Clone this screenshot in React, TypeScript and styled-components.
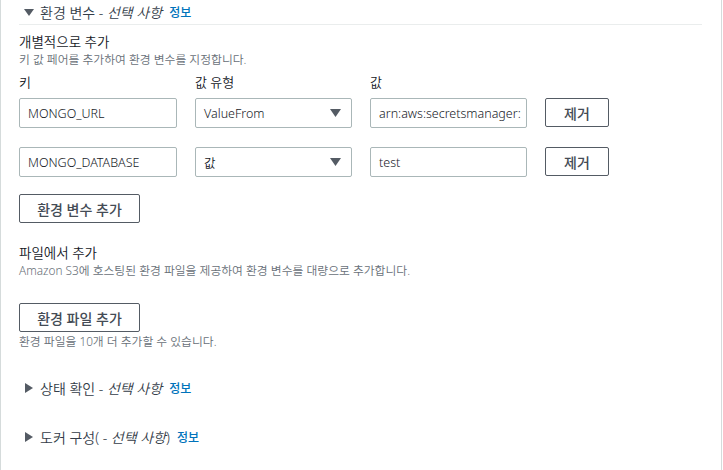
import React from 'react'
import styled, { createGlobalStyle } from 'styled-components'

const GlobalStyle = createGlobalStyle`
    html, body {
        margin: 0;
        padding: 0;
        background: #ffffff;
    }
    body {
        font-family: "Noto Sans", "Noto Sans CJK KR", sans-serif;
        font-weight: 350;
        color: #16191f;
    }
`

const Panel = styled.div`
    width: 722px;
    height: 470px;
    box-sizing: border-box;
    border-left: 1px solid #d5dbdb;
    border-right: 1px solid #d5dbdb;
    padding: 0 19px 0 18px;
`

const SectionHeader = styled.div<{ $divider?: boolean }>`
    display: flex;
    align-items: center;
    height: 24px;
    padding-left: 5px;
    border-bottom: ${(p) => (p.$divider ? '1px solid #eaeded' : 'none')};
    font-size: 14px;
    color: #333c48;
`

const Caret = styled.svg`
    width: 10px;
    height: 10px;
    margin-right: 6px;
    fill: #545b64;
    flex-shrink: 0;
`

const Optional = styled.i`
    font-style: italic;
`

const InfoLink = styled.a`
    margin-left: 7px;
    font-size: 12px;
    font-weight: 500;
    color: #0073bb;
    text-decoration: none;
`

const GroupTitle = styled.div`
    font-size: 13.5px;
    color: #16191f;
    line-height: 18px;
`

const Description = styled.div`
    font-size: 11.8px;
    color: #687078;
    line-height: 16px;
`

const Fields = styled.div`
    display: grid;
    grid-template-columns: 158px 157px 157px 64px;
    column-gap: 18px;
    row-gap: 19px;
    margin-top: 6px;
`

const Label = styled.div`
    font-size: 13px;
    line-height: 18px;
    color: #16191f;
    margin-bottom: -12px;
`

const Input = styled.div`
    height: 30px;
    box-sizing: border-box;
    border: 1px solid #aab7b8;
    border-radius: 2px;
    padding: 0 6px 0 8px;
    display: flex;
    align-items: center;
    font-size: 12.5px;
    color: #16191f;
    white-space: nowrap;
    overflow: hidden;
`

const Select = styled(Input)`
    justify-content: space-between;
    padding-right: 10px;
`

const SelectArrow = styled.svg`
    width: 11px;
    height: 8px;
    fill: #545b64;
`

const Button = styled.button<{ $width?: number }>`
    height: 29px;
    width: ${(p) => p.$width ?? 64}px;
    box-sizing: border-box;
    border: 1px solid #545b64;
    border-radius: 2px;
    background: #ffffff;
    font-family: inherit;
    font-size: 14px;
    font-weight: 500;
    color: #444b55;
    padding: 0;
    cursor: pointer;
`

const Hint = styled.div`
    font-size: 11.8px;
    color: #687078;
    line-height: 16px;
    margin-top: 1px;
`

const Block = styled.div<{ $top: number }>`
    margin-top: ${(p) => p.$top}px;
`

const envRows = [
    { key: 'MONGO_URL', type: 'ValueFrom', value: 'arn:aws:secretsmanager:' },
    { key: 'MONGO_DATABASE', type: '값', value: 'test' },
]

const DownCaret = () => (
    <Caret viewBox="0 0 10 10">
        <path d="M0 2h10L5 9z" />
    </Caret>
)

const RightCaret = () => (
    <Caret viewBox="0 0 10 10">
        <path d="M1 0v10l8-5z" />
    </Caret>
)

export default function App(): JSX.Element {
    return (
        <>
            <GlobalStyle />
            <Panel>
                <SectionHeader $divider>
                    <DownCaret />
                    환경 변수 -&nbsp;<Optional>선택 사항</Optional>
                    <InfoLink href="#">정보</InfoLink>
                </SectionHeader>

                <Block $top={8}>
                    <GroupTitle>개별적으로 추가</GroupTitle>
                    <Description>키 값 페어를 추가하여 환경 변수를 지정합니다.</Description>
                </Block>

                <Fields>
                    <Label>키</Label>
                    <Label>값 유형</Label>
                    <Label>값</Label>
                    <div />
                    {envRows.map((row) => (
                        <React.Fragment key={row.key}>
                            <Input>{row.key}</Input>
                            <Select>
                                {row.type}
                                <SelectArrow viewBox="0 0 11 8">
                                    <path d="M0 0h11L5.5 8z" />
                                </SelectArrow>
                            </Select>
                            <Input>{row.value}</Input>
                            <Button>제거</Button>
                        </React.Fragment>
                    ))}
                </Fields>

                <Block $top={17}>
                    <Button $width={121}>환경 변수 추가</Button>
                </Block>

                <Block $top={21}>
                    <GroupTitle>파일에서 추가</GroupTitle>
                    <Description>Amazon S3에 호스팅된 환경 파일을 제공하여 환경 변수를 대량으로 추가합니다.</Description>
                </Block>

                <Block $top={25}>
                    <Button $width={121}>환경 파일 추가</Button>
                    <Hint>환경 파일을 10개 더 추가할 수 있습니다.</Hint>
                </Block>

                <Block $top={27}>
                    <SectionHeader>
                        <RightCaret />
                        상태 확인 -&nbsp;<Optional>선택 사항</Optional>
                        <InfoLink href="#">정보</InfoLink>
                    </SectionHeader>
                </Block>

                <Block $top={25}>
                    <SectionHeader>
                        <RightCaret />
                        도커 구성( -&nbsp;<Optional>선택 사항</Optional>)
                        <InfoLink href="#">정보</InfoLink>
                    </SectionHeader>
                </Block>
            </Panel>
        </>
    )
}
